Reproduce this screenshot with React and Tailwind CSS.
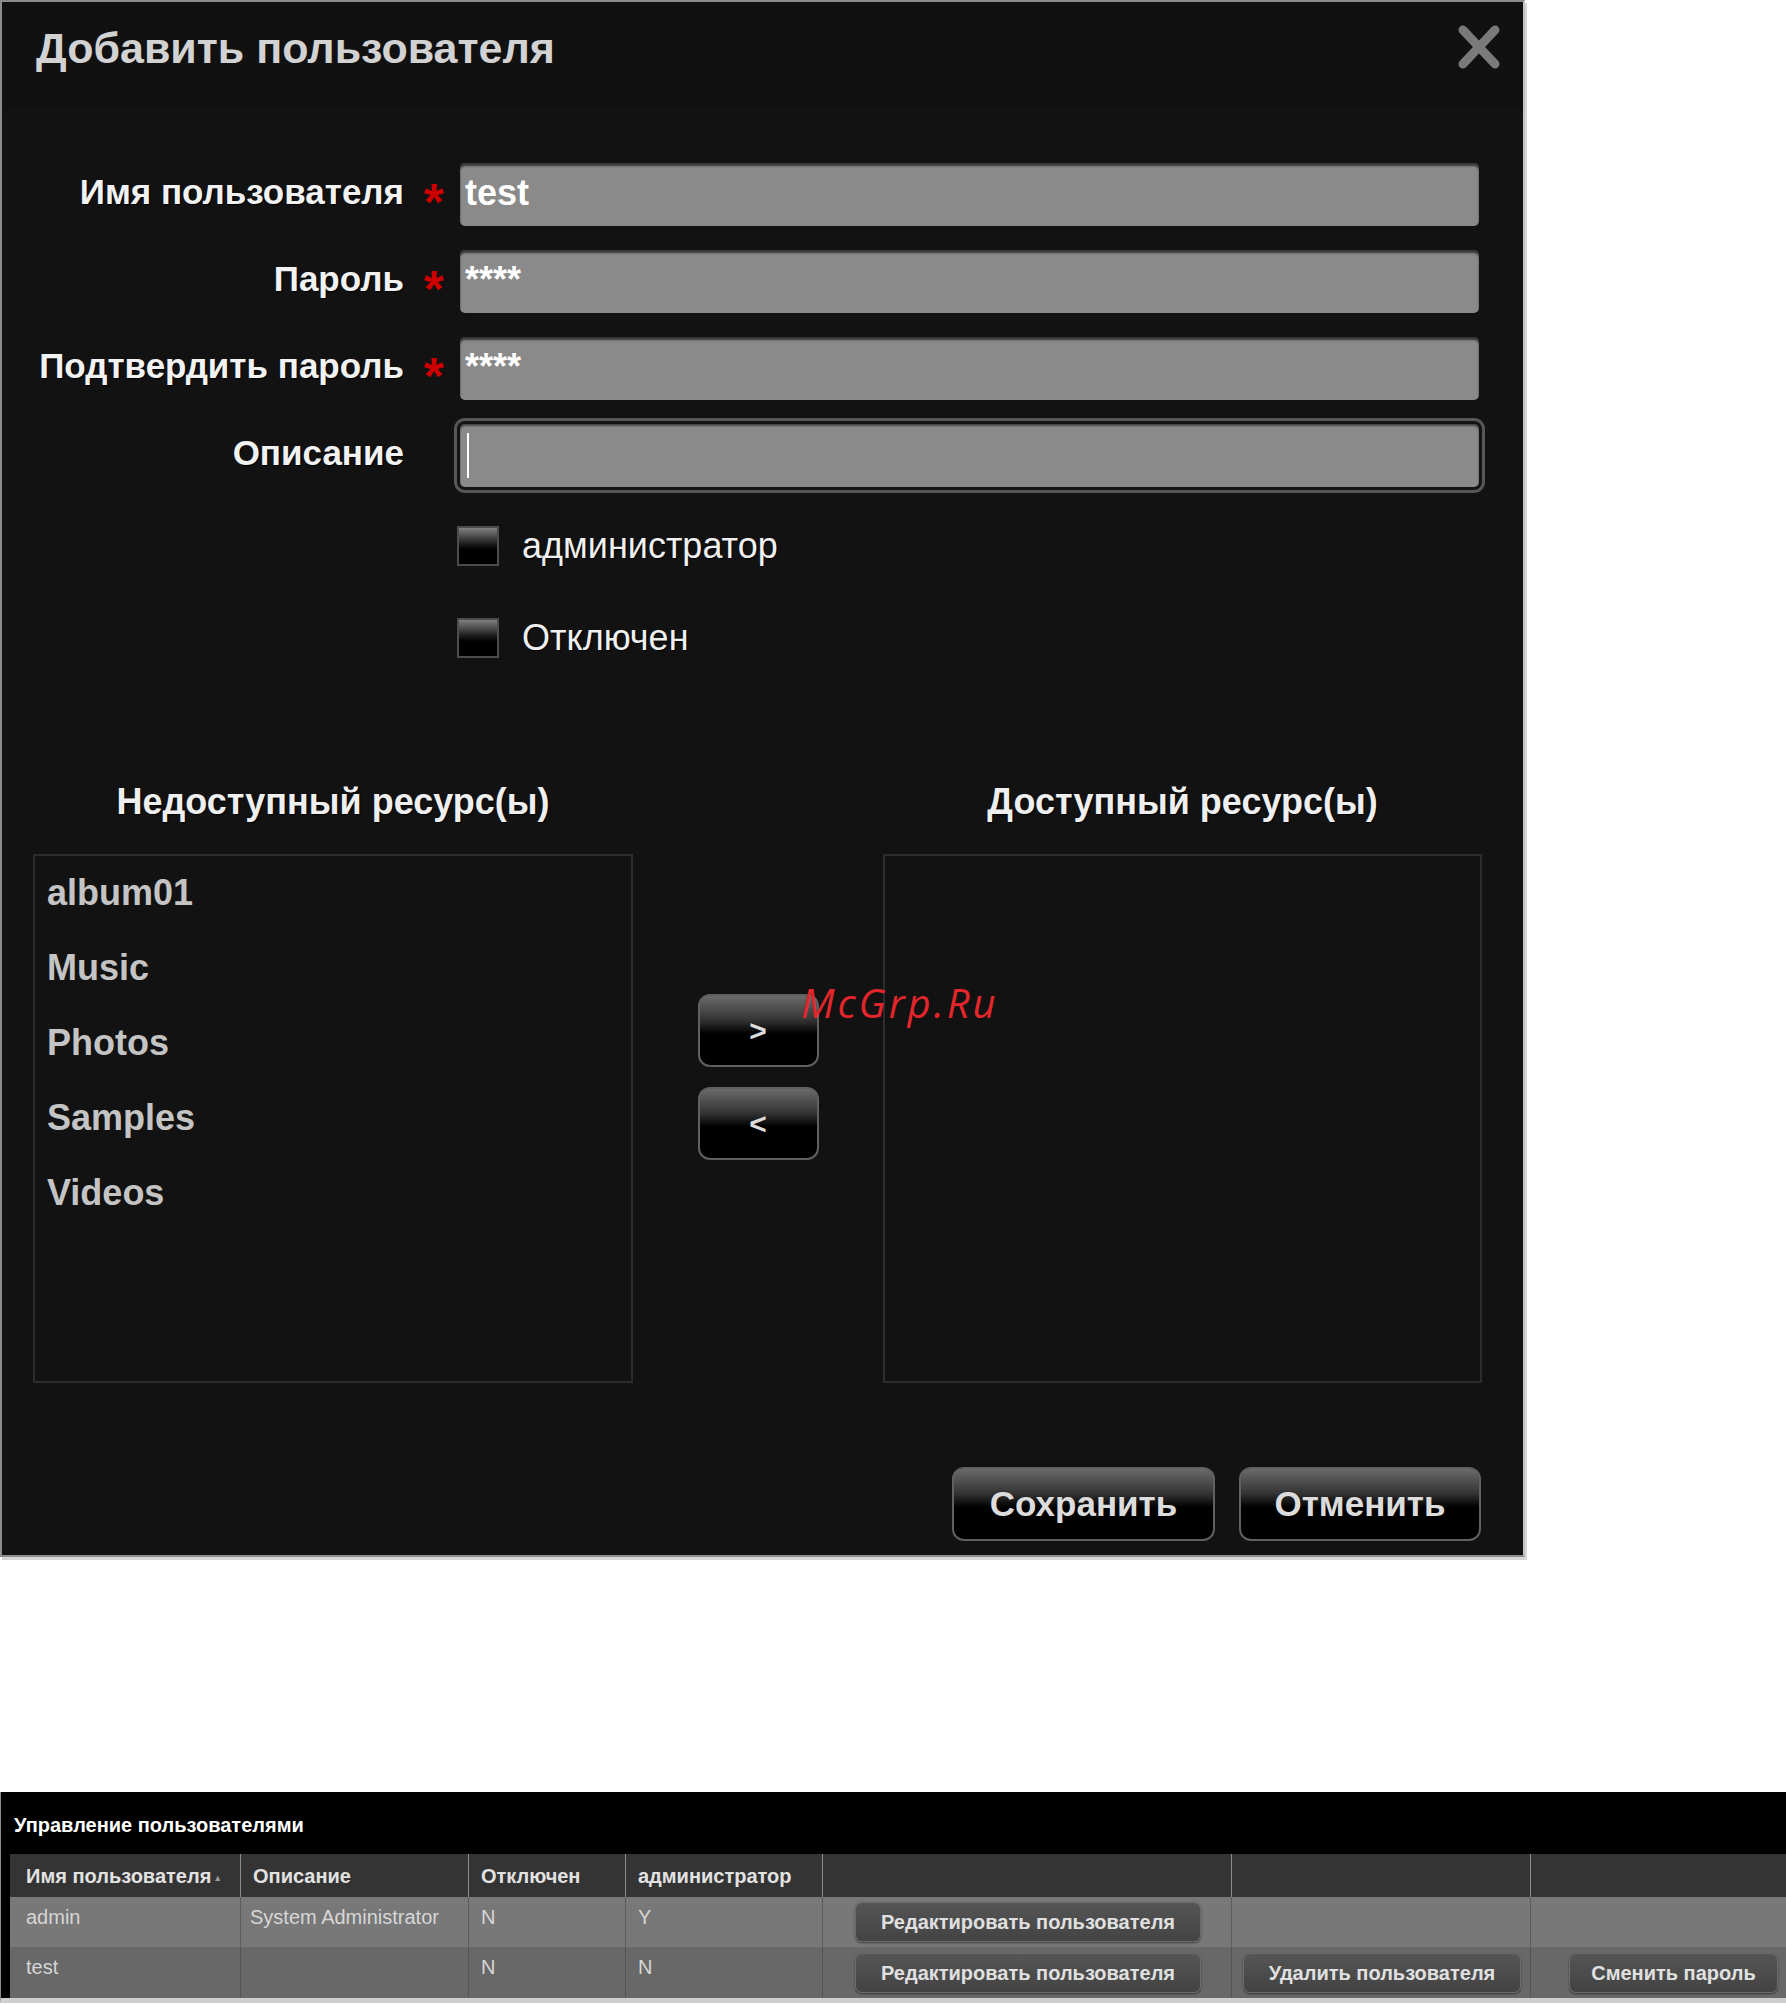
import React from 'react';

const resources = ['album01', 'Music', 'Photos', 'Samples', 'Videos'];

function Field({ label, required, focused, children }) {
  return (
    <div className="flex items-center h-[63px]">
      <div className="w-[402px] pb-[4px] text-right text-[35px] font-bold text-[#f2f2f2] [text-shadow:1px_1px_1px_#000]">
        {label}
      </div>
      <div className="w-[56px] h-full flex items-center pl-[20px]">
        {required && (
          <span className="text-[52px] font-bold leading-none text-[#cc0000] translate-y-[7px]">*</span>
        )}
      </div>
      <div
        className={`w-[1019px] h-[63px] rounded-[5px] bg-[#8a8a8a] flex items-center pl-[5px] pb-[4px] text-[36px] font-bold text-white ${
          focused
            ? 'shadow-[inset_0_2px_2px_rgba(0,0,0,0.5),0_0_0_3px_#141414,0_0_0_6px_#575757]'
            : 'shadow-[inset_0_3px_2px_rgba(0,0,0,0.6)]'
        }`}
      >
        {children}
      </div>
    </div>
  );
}

function Checkbox({ label }) {
  return (
    <div className="flex items-center h-[40px]">
      <div className="w-[42px] h-[40px] border-2 border-[#4c4c4c] bg-[linear-gradient(180deg,#808080_0%,#1a1a1a_45%,#000_60%,#000_100%)]" />
      <span className="ml-[23px] text-[36px] text-[#f0f0f0] [text-shadow:1px_1px_1px_#000]">{label}</span>
    </div>
  );
}

function DarkButton({ children, className }) {
  return (
    <button
      className={`rounded-[12px] border-2 border-[#606060] bg-[linear-gradient(180deg,#6a6a6a_0%,#333_35%,#000_55%,#000_100%)] font-bold text-[#dcdcdc] flex items-center justify-center ${className}`}
    >
      {children}
    </button>
  );
}

function RowButton({ children, width }) {
  return (
    <button
      className={`h-[40px] ${width} rounded-[7px] border border-[#6c6c6c] bg-[linear-gradient(180deg,#555_0%,#434343_100%)] text-[20px] font-bold text-[#e0e0e0] shadow-[0_1px_2px_rgba(0,0,0,0.5)]`}
    >
      {children}
    </button>
  );
}

export default function App() {
  return (
    <div className="min-h-screen bg-white font-['Liberation_Sans',Arial,sans-serif]">
      {/* Add user dialog */}
      <div className="relative w-[1525px] h-[1557px] bg-[#121212] border-2 border-[#8c8c8c] border-r-[#c4c4c4] shadow-[2px_3px_0_#d6d6d6] flex flex-col">
        <div className="h-[105px] bg-[#111111] border-b border-[#0d0d0d] flex items-start justify-between pl-[34px] pr-[19px]">
          <h1 className="pt-[22px] text-[43px] leading-[48px] font-bold text-[#d2d2d2]">Добавить пользователя</h1>
          <svg className="mt-[20px]" width="50" height="50" viewBox="0 0 50 50">
            <path d="M9 8 L41 42 M41 8 L9 42" stroke="#7a7a7a" strokeWidth="9" strokeLinecap="round" fill="none" />
          </svg>
        </div>

        <div className="flex flex-col gap-[24px] pt-[56px]">
          <Field label="Имя пользователя" required>test</Field>
          <Field label="Пароль" required>****</Field>
          <Field label="Подтвердить пароль" required>****</Field>
          <Field label="Описание" focused>
            <span className="w-[2px] h-[45px] bg-white ml-[2px] mt-[4px]" />
          </Field>
        </div>

        <div className="flex flex-col gap-[52px] pl-[455px] mt-[39px]">
          <Checkbox label="администратор" />
          <Checkbox label="Отключен" />
        </div>

        <div className="flex items-start pl-[31px] mt-[122px]">
          <div className="w-[600px]">
            <h2 className="h-[44px] leading-[44px] mb-[30px] text-center text-[36px] font-bold text-[#efefef] [text-shadow:1px_1px_1px_#000]">
              Недоступный ресурс(ы)
            </h2>
            <div className="h-[529px] border-2 border-[#2c2c2c] pl-[12px]">
              {resources.map((r) => (
                <div key={r} className="h-[75px] leading-[74px] text-[36px] font-bold text-[#c4c4c4]">
                  {r}
                </div>
              ))}
            </div>
          </div>

          <div className="w-[250px] flex flex-col items-center gap-[20px] pt-[214px]">
            <DarkButton className="w-[121px] h-[73px] text-[30px]">&gt;</DarkButton>
            <DarkButton className="w-[121px] h-[73px] text-[30px]">&lt;</DarkButton>
          </div>

          <div className="w-[599px]">
            <h2 className="h-[44px] leading-[44px] mb-[30px] text-center text-[36px] font-bold text-[#efefef] [text-shadow:1px_1px_1px_#000]">
              Доступный ресурс(ы)
            </h2>
            <div className="h-[529px] border-2 border-[#2c2c2c]" />
          </div>
        </div>

        <div className="flex justify-end gap-[24px] pr-[42px] mt-[84px]">
          <DarkButton className="w-[263px] h-[74px] text-[35px]">Сохранить</DarkButton>
          <DarkButton className="w-[242px] h-[74px] text-[35px]">Отменить</DarkButton>
        </div>

        {/* watermark */}
        <span className="absolute left-[799px] top-[981px] font-['Open_Sans',sans-serif] italic text-[40px] leading-[40px] tracking-[3px] text-[#e3262b]">
          McGrp.Ru
        </span>
      </div>

      {/* User management table */}
      <div className="mt-[235px] w-full bg-black border-l border-[#8a8a8a] border-b-[5px] border-b-[#cfcfcf]">
        <div className="h-[62px] flex items-center pl-[13px] pt-[4px] text-[20px] font-bold text-white">
          Управление пользователями
        </div>
        <div className="ml-[9px] grid grid-cols-[230px_228px_157px_197px_409px_299px_1fr] text-[20px]">
          <div className="h-[43px] bg-[#343434] flex items-center pl-[16px] font-bold text-[#e2e2e2]">
            Имя пользователя
            <span className="self-end mb-[12px] ml-[2px] text-[9px] text-[#9a9a9a]">▲</span>
          </div>
          <div className="h-[43px] bg-[#343434] border-l border-[#8c8c8c] flex items-center pl-[12px] font-bold text-[#e2e2e2]">Описание</div>
          <div className="h-[43px] bg-[#343434] border-l border-[#8c8c8c] flex items-center pl-[12px] font-bold text-[#e2e2e2]">Отключен</div>
          <div className="h-[43px] bg-[#343434] border-l border-[#8c8c8c] flex items-center pl-[12px] font-bold text-[#e2e2e2]">администратор</div>
          <div className="h-[43px] bg-[#343434] border-l border-[#8c8c8c]" />
          <div className="h-[43px] bg-[#343434] border-l border-[#8c8c8c]" />
          <div className="h-[43px] bg-[#343434] border-l border-[#8c8c8c]" />

          <div className="h-[50px] bg-[#787878] pl-[16px] pt-[5px] text-[#d6d6d6]">admin</div>
          <div className="h-[50px] bg-[#787878] border-l border-[#5c5c5c] pl-[9px] pt-[5px] text-[#d6d6d6]">System Administrator</div>
          <div className="h-[50px] bg-[#787878] border-l border-[#5c5c5c] pl-[12px] pt-[5px] text-[#d6d6d6]">N</div>
          <div className="h-[50px] bg-[#787878] border-l border-[#5c5c5c] pl-[12px] pt-[5px] text-[#d6d6d6]">Y</div>
          <div className="h-[50px] bg-[#787878] border-l border-[#5c5c5c] flex items-center pl-[32px]">
            <RowButton width="w-[346px]">Редактировать пользователя</RowButton>
          </div>
          <div className="h-[50px] bg-[#787878] border-l border-[#5c5c5c]" />
          <div className="h-[50px] bg-[#787878] border-l border-[#5c5c5c]" />

          <div className="h-[51px] bg-[#686868] pl-[16px] pt-[5px] text-[#d6d6d6]">test</div>
          <div className="h-[51px] bg-[#686868] border-l border-[#555]" />
          <div className="h-[51px] bg-[#686868] border-l border-[#555] pl-[12px] pt-[5px] text-[#d6d6d6]">N</div>
          <div className="h-[51px] bg-[#686868] border-l border-[#555] pl-[12px] pt-[5px] text-[#d6d6d6]">N</div>
          <div className="h-[51px] bg-[#686868] border-l border-[#555] flex items-center pl-[32px]">
            <RowButton width="w-[346px]">Редактировать пользователя</RowButton>
          </div>
          <div className="h-[51px] bg-[#686868] border-l border-[#555] flex items-center pl-[11px]">
            <RowButton width="w-[278px]">Удалить пользователя</RowButton>
          </div>
          <div className="h-[51px] bg-[#686868] border-l border-[#555] flex items-center pl-[38px]">
            <RowButton width="w-[209px]">Сменить пароль</RowButton>
          </div>
        </div>
      </div>
    </div>
  );
}
